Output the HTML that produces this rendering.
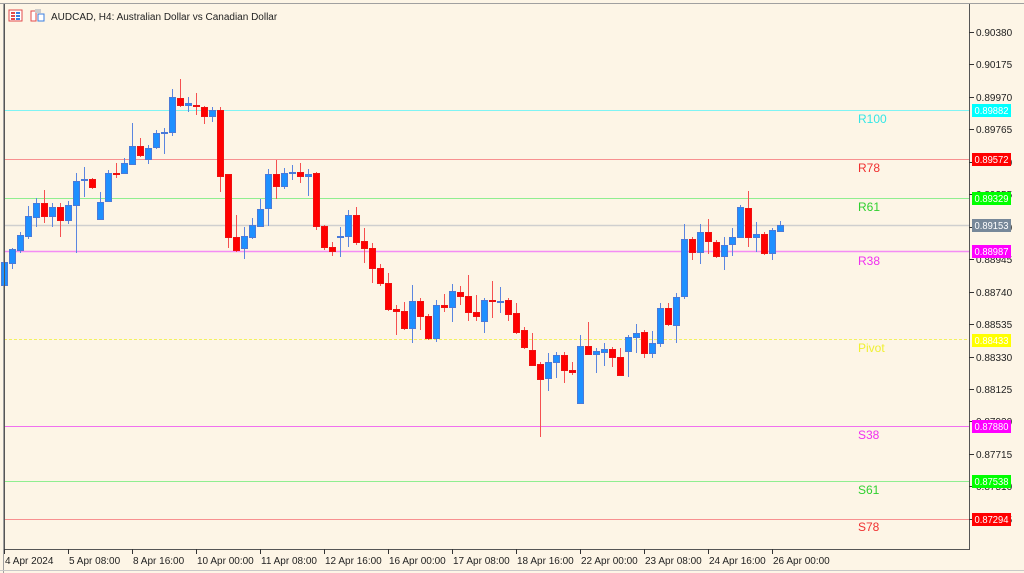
<!DOCTYPE html>
<html><head><meta charset="utf-8"><style>
html,body{margin:0;padding:0;background:#fdf5e6;}
body{width:1024px;height:573px;overflow:hidden;position:relative;font-family:"Liberation Sans",sans-serif;}
svg{position:absolute;left:0;top:0;}
</style></head><body>
<svg id="s" width="1024" height="573" xmlns="http://www.w3.org/2000/svg" font-family="Liberation Sans, sans-serif">
<rect x="0" y="0" width="1024" height="573" fill="#fdf5e6"/>
<line x1="0" y1="3.5" x2="1024" y2="3.5" stroke="#a0a0a0"/>
<line x1="3.5" y1="3" x2="3.5" y2="573" stroke="#a0a0a0"/>
<line x1="0" y1="570.5" x2="1024" y2="570.5" stroke="#c8c8c8"/>
<rect x="9" y="10" width="13" height="11" fill="#fff" stroke="#e24a4a"/>
<rect x="11" y="12" width="4" height="2" fill="#e24a4a"/><rect x="16" y="12" width="4" height="2" fill="#3a7ee0"/>
<rect x="11" y="15" width="4" height="2" fill="#e24a4a"/><rect x="16" y="15" width="4" height="2" fill="#3a7ee0"/>
<rect x="11" y="18" width="4" height="2" fill="#e24a4a"/><rect x="16" y="18" width="4" height="2" fill="#3a7ee0"/>
<rect x="31" y="11" width="5" height="10" fill="#fff" stroke="#e24a4a"/>
<rect x="38" y="14" width="6" height="7" fill="#fff" stroke="#3a7ee0"/>
<rect x="35" y="9" width="6" height="4" fill="#ccc"/>
<text x="51" y="20" font-size="10" fill="#222">AUDCAD, H4:  Australian Dollar vs Canadian Dollar</text>
<line x1="4" y1="110.5" x2="969" y2="110.5" stroke="#7ff4f4"/>
<line x1="4" y1="159.5" x2="969" y2="159.5" stroke="#f89090"/>
<line x1="4" y1="198.5" x2="969" y2="198.5" stroke="#90ee90"/>
<line x1="4" y1="225.5" x2="969" y2="225.5" stroke="#cfcfcf" stroke-width="1.5"/>
<line x1="4" y1="251.5" x2="969" y2="251.5" stroke="#f48cf4" stroke-width="1.5"/>
<line x1="4" y1="339.5" x2="969" y2="339.5" stroke="#f2f060" stroke-dasharray="3,2"/>
<line x1="4" y1="426.5" x2="969" y2="426.5" stroke="#f070f0"/>
<line x1="4" y1="481.5" x2="969" y2="481.5" stroke="#90ee90"/>
<line x1="4" y1="519.5" x2="969" y2="519.5" stroke="#f89090"/>
<g font-size="12">
<text x="858" y="123" fill="#33e6e6">R100</text>
<text x="858" y="172" fill="#f03030">R78</text>
<text x="858" y="211" fill="#30d030">R61</text>
<text x="858" y="265" fill="#f030f0">R38</text>
<text x="858" y="352" fill="#f0f030">Pivot</text>
<text x="858" y="439" fill="#f030f0">S38</text>
<text x="858" y="494" fill="#30d030">S61</text>
<text x="858" y="531" fill="#f03030">S78</text>
</g>
<g id="candles"></g>
<line x1="969.5" y1="4" x2="969.5" y2="550" stroke="#555"/>
<line x1="4.5" y1="4" x2="4.5" y2="550" stroke="#555"/>
<line x1="4" y1="549.5" x2="970" y2="549.5" stroke="#555"/>
<g id="yax" font-size="10" fill="#222"></g>
<g id="xax" font-size="10" fill="#222"></g>
<g id="tags" font-size="10" fill="#fff"></g>
</svg>
<script>
var NS="http://www.w3.org/2000/svg";
function el(p,t,a,txt){var e=document.createElementNS(NS,t);for(var k in a)e.setAttribute(k,a[k]);if(txt!==undefined)e.textContent=txt;p.appendChild(e);return e;}
var D=[[0,'b',258,290,262,286],[1,'b',248,269,249,264],[2,'b',232,253,235,251],[3,'b',206,239,216,237],[4,'b',198,227,203,218],[5,'r',190,223,203,217],[6,'b',203,227,207,217],[7,'r',203,237,207,221],[8,'b',201,224,205,221],[9,'b',173,253,181,206],[10,'b',167,197,179,181],[11,'r',178,189,179,188],[12,'b',192,220,202,220],[13,'b',170,202,173,202],[14,'r',163,178,173,175],[15,'b',158,174,163,174],[16,'b',123,165,146,165],[17,'r',138,157,146,156],[18,'b',145,164,148,160],[19,'b',130,149,133,148],[20,'b',128,154,132,134],[21,'b',89,136,97,133],[22,'r',79,107,98,106],[23,'b',97,112,103,106],[24,'r',93,115,105,107],[25,'r',106,124,107,117],[26,'b',107,122,110,117],[27,'r',107,192,110,177],[28,'r',174,248,174,238],[29,'r',215,252,237,251],[30,'b',227,259,236,249],[31,'b',218,239,225,238],[32,'b',199,227,209,227],[33,'b',169,226,174,209],[34,'r',160,199,174,187],[35,'b',168,189,173,187],[36,'b',165,180,172,174],[37,'r',163,183,172,177],[38,'b',169,196,174,177],[39,'r',172,230,173,227],[40,'r',225,250,226,248],[41,'r',242,256,247,252],[42,'b',227,257,236,238],[43,'b',210,247,215,237],[44,'r',207,245,215,243],[45,'r',228,263,241,249],[46,'r',243,283,248,269],[47,'r',264,286,268,284],[48,'r',273,311,283,310],[49,'r',305,335,309,312],[50,'r',302,330,311,329],[51,'b',285,343,301,329],[52,'r',298,330,301,317],[53,'r',314,340,316,339],[54,'b',300,342,305,339],[55,'r',294,312,305,308],[56,'b',284,322,291,308],[57,'r',286,305,292,297],[58,'r',275,321,296,313],[59,'r',295,321,312,317],[60,'b',298,333,300,322],[61,'r',281,318,300,302],[62,'b',287,313,301,303],[63,'r',298,321,300,315],[64,'r',303,334,313,333],[65,'r',327,349,330,348],[66,'r',333,366,350,366],[67,'r',362,437,364,380],[68,'b',353,391,362,379],[69,'b',352,378,355,363],[70,'r',352,383,355,371],[71,'r',362,375,370,373],[72,'b',335,404,346,404],[73,'r',322,355,346,355],[74,'b',348,373,351,355],[75,'b',343,366,349,353],[76,'r',347,367,349,358],[77,'r',348,376,357,376],[78,'b',335,377,337,352],[79,'b',324,353,333,338],[80,'r',330,358,332,354],[81,'b',331,358,343,354],[82,'b',303,347,308,344],[83,'r',303,326,308,325],[84,'b',293,343,297,326],[85,'b',224,299,239,297],[86,'r',237,260,239,253],[87,'b',224,264,232,253],[88,'r',219,254,232,242],[89,'r',240,258,242,257],[90,'b',237,270,245,257],[91,'b',228,256,237,245],[92,'b',205,238,207,238],[93,'r',191,247,208,238],[94,'b',222,252,234,238],[95,'r',232,255,234,254],[96,'b',228,260,230,254],[97,'b',221,232,225,232]];
var g=document.getElementById('candles');
D.forEach(function(d){var x=4+8*d[0];var isB=d[1]=='b';
el(g,'line',{x1:x+0.5,x2:x+0.5,y1:d[2],y2:d[3],stroke:isB?'#5b86e0':'#f55050'});
var h=Math.max(2,d[5]-d[4]);
el(g,'rect',{x:x-2.5,y:d[4]+0.5,width:6,height:h-1,fill:isB?'#1e90ff':'#ff0000',stroke:isB?'#4a7ad8':'#ee1010','stroke-width':1});
});
var ya=document.getElementById('yax');
var P=['0.90380','0.90175','0.89970','0.89765','0.89560','0.89355','0.89150','0.88945','0.88740','0.88535','0.88330','0.88125','0.87920','0.87715','0.87510','0.87305'];
P.forEach(function(p,i){var y=Math.round(32+i*32.45);el(ya,'line',{x1:969,x2:974,y1:y+0.5,y2:y+0.5,stroke:'#333'});el(ya,'text',{x:976,y:y+4},p);});
var xa=document.getElementById('xax');
var T=['4 Apr 2024','5 Apr 08:00','8 Apr 16:00','10 Apr 00:00','11 Apr 08:00','12 Apr 16:00','16 Apr 00:00','17 Apr 08:00','18 Apr 16:00','22 Apr 00:00','23 Apr 08:00','24 Apr 16:00','26 Apr 00:00'];
T.forEach(function(t,i){var x=4+64*i;el(xa,'line',{x1:x+0.5,x2:x+0.5,y1:549,y2:554,stroke:'#333'});el(xa,'text',{x:x+1,y:564},t);});
var tg=document.getElementById('tags');
[[110,'#00ffff','0.89882'],[159,'#ff0000','0.89572'],[198,'#00ff00','0.89329'],[225,'#778899','0.89153'],[251,'#ff00ff','0.88987'],[340,'#ffff00','0.88433'],[426,'#ff00ff','0.87880'],[481,'#00ff00','0.87538'],[519,'#ff0000','0.87294']].forEach(function(a){
el(tg,'rect',{x:972,y:a[0]-6,width:39,height:13,fill:a[1]});el(tg,'text',{x:974.5,y:a[0]+4,textLength:34,lengthAdjust:'spacingAndGlyphs'},a[2]);});
</script>
</body></html>
